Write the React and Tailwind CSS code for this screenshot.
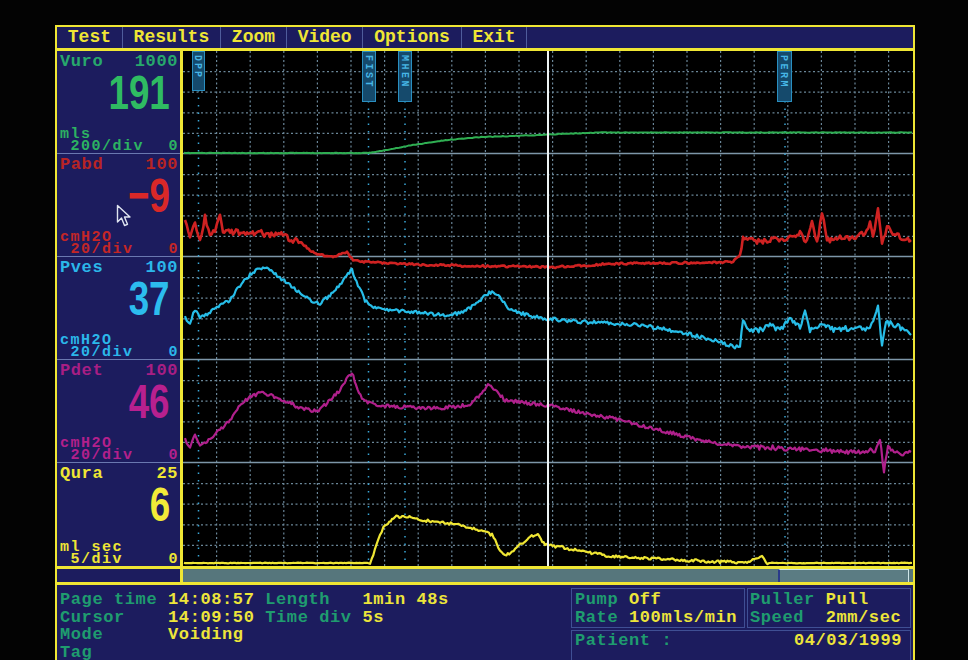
import React from 'react';

// Deterministic jitter so the pressure traces look like raw sampled data
function rng(seed) {
  let s = seed;
  return () => {
    s = (s * 16807) % 2147483647;
    return (s - 1) / 2147483646;
  };
}

const OX = 183;
const OY = 51;

function trace(keys, amp, seed, step = 1.5) {
  const r = rng(seed);
  const pts = [];
  for (let i = 0; i < keys.length - 1; i++) {
    const [x0, y0] = keys[i];
    const [x1, y1] = keys[i + 1];
    const n = Math.max(1, Math.round((x1 - x0) / step));
    for (let j = 0; j < n; j++) {
      const t = j / n;
      const x = x0 + (x1 - x0) * t;
      const y = y0 + (y1 - y0) * t;
      const a = amp(x);
      pts.push([x, y + (r() - 0.5) * 2 * a]);
    }
  }
  pts.push(keys[keys.length - 1]);
  return pts.map(([x, y]) => `${(x - OX).toFixed(1)},${(y - OY).toFixed(1)}`).join(' ');
}

const vuroKeys = [
  [184, 153], [368, 153], [387, 150], [413, 145], [447, 140], [480, 137], [513, 136],
  [560, 134], [600, 132.5], [912, 132.5],
];

const pabdKeys = [
  [185, 223], [190, 237], [195, 225], [200, 240], [205, 217], [210, 237], [215, 230],
  [220, 213], [223, 233], [233, 232], [247, 233], [257, 232], [270, 235], [280, 232],
  [290, 240], [300, 242], [310, 250], [320, 255], [333, 257], [347, 252], [353, 260],
  [367, 262], [393, 263], [430, 265], [480, 266], [560, 267], [607, 264], [673, 263],
  [733, 262], [740, 255], [743, 237], [757, 242], [773, 240], [793, 237], [800, 233],
  [807, 242], [812, 220], [817, 243], [822, 211], [827, 240], [840, 238], [857, 237],
  [865, 232], [870, 223], [873, 237], [878, 207], [882, 243], [887, 227], [893, 233],
  [900, 237], [911, 240],
];

const pvesKeys = [
  [185, 318], [190, 322], [195, 310], [200, 318], [210, 312], [220, 305], [230, 300],
  [240, 285], [250, 275], [260, 268], [270, 270], [280, 278], [290, 285], [300, 293],
  [310, 300], [320, 303], [330, 295], [340, 285], [348, 273], [352, 270], [358, 285],
  [365, 300], [375, 308], [390, 310], [410, 312], [440, 315], [460, 313], [475, 305],
  [485, 295], [492, 292], [500, 298], [510, 310], [520, 313], [540, 318], [560, 320],
  [600, 323], [640, 325], [680, 332], [700, 337], [720, 342], [735, 347], [740, 345],
  [743, 322], [750, 330], [760, 330], [770, 325], [780, 330], [790, 318], [800, 328],
  [805, 308], [810, 330], [820, 325], [835, 330], [850, 328], [870, 330], [878, 305],
  [882, 347], [886, 322], [895, 325], [905, 330], [911, 335],
];

const pdetKeys = [
  [185, 440], [190, 448], [195, 435], [200, 445], [210, 440], [220, 430], [230, 420],
  [240, 405], [250, 397], [260, 393], [270, 395], [280, 400], [290, 403], [300, 408],
  [310, 410], [320, 410], [330, 400], [340, 390], [348, 377], [352, 372], [356, 385],
  [362, 400], [375, 405], [400, 407], [440, 408], [470, 405], [480, 395], [488, 385],
  [495, 390], [505, 400], [520, 402], [545, 405], [580, 412], [620, 420], [660, 430],
  [700, 440], [740, 447], [780, 448], [820, 450], [860, 452], [875, 450], [880, 438],
  [884, 472], [888, 448], [900, 455], [911, 452],
];

const quraKeys = [
  [184, 563], [370, 563], [375, 550], [380, 535], [385, 525], [395, 517], [405, 516],
  [420, 520], [440, 522], [460, 525], [480, 530], [492, 535], [500, 550], [505, 555],
  [512, 552], [520, 545], [530, 537], [538, 535], [545, 545], [560, 547], [575, 550],
  [590, 553], [610, 556], [640, 558], [680, 560], [720, 562], [750, 562], [757, 558],
  [762, 556], [766, 563], [912, 563],
];

const traces = [
  { pts: trace(vuroKeys, () => 0.3, 11), color: '#2fae52', w: 2 },
  { pts: trace(pabdKeys, (x) => (x < 300 ? 3 : x > 740 ? 2.6 : 1), 23), color: '#cf2222', w: 2.6 },
  { pts: trace(pvesKeys, (x) => (x > 740 ? 2.6 : 1.8), 37), color: '#27bde8', w: 2.2 },
  { pts: trace(pdetKeys, (x) => (x > 740 ? 2.4 : 1.8), 51), color: '#b0208c', w: 2.2 },
  { pts: trace(quraKeys, (x) => (x < 370 || x > 770 ? 0.3 : 1.4), 67), color: '#efe634', w: 2.2 },
];

const markers = [
  { x: 9, w: 13, h: 39, line: 15.5, label: 'DPP' },
  { x: 179, w: 14, h: 50, line: 185.5, label: 'FIST' },
  { x: 215, w: 14, h: 50, line: 222, label: 'MHEN' },
  { x: 594, w: 15, h: 50, line: 602, label: 'PERM' },
];

function Chart() {
  const W = 730;
  const H = 515;
  const vlines = Array.from({ length: 21 }, (_, i) => 33.6 * (i + 1));
  const hlines = [];
  for (let c = 0; c < 5; c++) for (let k = 1; k < 5; k++) hlines.push(c * 103 + k * 20.6);
  const seps = [1, 2, 3, 4].map((c) => c * 103 - 0.5);
  return (
    <svg width={W} height={H} className="block bg-black">
      {vlines.map((x) => (
        <line key={'v' + x} x1={x} y1={0} x2={x} y2={H} stroke="#6a8698" strokeWidth="1.2" strokeDasharray="2 2.5" />
      ))}
      {hlines.map((y) => (
        <line key={'h' + y} x1={0} y1={y} x2={W} y2={y} stroke="#6a8698" strokeWidth="1.2" strokeDasharray="2 2.5" />
      ))}
      {seps.map((y) => (
        <line key={'s' + y} x1={0} y1={y} x2={W} y2={y} stroke="#7d96a8" strokeWidth="1.4" />
      ))}
      {markers.map((m) => (
        <g key={m.label}>
          <line x1={m.line} y1={m.h} x2={m.line} y2={H} stroke="#3aa6d6" strokeWidth="1.5" strokeDasharray="1.5 6" />
          <rect x={m.x + 0.5} y={0.5} width={m.w - 1} height={m.h} fill="#154a6c" stroke="#2a8fc0" strokeWidth="1" />
          <text
            x={m.x + m.w / 2 - 3.5}
            y={4}
            transform={`rotate(90 ${m.x + m.w / 2 - 3.5} 4)`}
            fill="#47b6e6"
            fontSize="10"
            fontWeight="bold"
            letterSpacing={m.h > 40 ? 2.5 : 2}
            fontFamily="Liberation Mono, monospace"
          >
            {m.label}
          </text>
        </g>
      ))}
      {traces.map((t, i) => (
        <polyline key={i} points={t.pts} fill="none" stroke={t.color} strokeWidth={t.w} strokeLinejoin="round" />
      ))}
      <line x1={365} y1={0} x2={365} y2={H} stroke="#eef4f4" strokeWidth="2" />
    </svg>
  );
}

const channels = [
  { name: 'Vuro', range: '1000', value: '191', unit: 'mls', div: ' 200/div', text: 'text-[#2cb262]', label: 'text-[#27a86c]', big: 'text-[#2fbb62]' },
  { name: 'Pabd', range: '100', value: '\u22129', unit: 'cmH2O', div: ' 20/div', text: 'text-[#c42626]', label: 'text-[#b82424]', big: 'text-[#d92828]', pointer: true },
  { name: 'Pves', range: '100', value: '37', unit: 'cmH2O', div: ' 20/div', text: 'text-[#2bb7ea]', label: 'text-[#2bb7ea]', big: 'text-[#2cbcee]' },
  { name: 'Pdet', range: '100', value: '46', unit: 'cmH2O', div: ' 20/div', text: 'text-[#b3208c]', label: 'text-[#a81e84]', big: 'text-[#b8208f]' },
  { name: 'Qura', range: '25', value: '6', unit: 'ml sec', div: ' 5/div', text: 'text-[#efe634]', label: 'text-[#efe634]', big: 'text-[#f2ea38]', last: true },
];

function Channel({ c }) {
  return (
    <div className={c.last ? `relative h-[103px] flex flex-col ${c.text}` : `relative h-[103px] flex flex-col border-b border-[#6a78b0] ${c.text}`}>
      <div className={`flex justify-between pl-[3px] pr-[2px] pt-[3px] leading-[16px] text-[17px] tracking-[0.6px] ${c.label}`}>
        <span>{c.name}</span>
        <span>{c.range}</span>
      </div>
      <div className={`flex justify-end pr-[10px] mt-[2px] h-[40px] leading-[40px] text-[49px] font-['Liberation_Sans',sans-serif] ${c.big}`}>
        <span className="inline-block origin-right scale-x-[0.75]">{c.value}</span>
      </div>
      <div className="mt-auto text-[15px] tracking-[1.5px] leading-[12px] whitespace-pre">
        <div className="pl-[3px]">{c.unit}</div>
        <div className="flex justify-between pl-[3px] pr-[1px]">
          <span>{c.div}</span>
          <span>0</span>
        </div>
      </div>
      {c.pointer && (
        <svg className="absolute left-[59px] top-[50px]" width="16" height="24" viewBox="0 0 16 24">
          <path d="M1.5 1.5 V18 L5.5 14 L8.5 21.5 L11.5 20.3 L8.5 13 H14 Z" fill="none" stroke="#dfe4f0" strokeWidth="1.4" strokeLinejoin="round" />
        </svg>
      )}
    </div>
  );
}

const menu = ['Test', 'Results', 'Zoom', 'Video', 'Options', 'Exit'];

function Label({ children }) {
  return <span className="text-[#1f9c6f]">{children}</span>;
}
function Val({ children }) {
  return <span className="text-[#ede53a]">{children}</span>;
}

export default function App() {
  return (
    <div className="w-[968px] h-[660px] overflow-hidden bg-[#030303] pt-[25px] pl-[55px] font-['Liberation_Mono',monospace] font-bold text-[18px]">
      <div className="w-[860px] h-[650px] border-2 border-b-0 border-[#efe634] bg-[#1c1c5e] flex flex-col">
        {/* menu bar */}
        <div className="flex h-[24px] shrink-0 border-b-[3px] border-[#efe634] text-[#efe634] leading-[21px] whitespace-pre">
          {menu.map((m) => (
            <div key={m} className="px-[1ch] border-r border-[#4f5c9c]">
              {m}
            </div>
          ))}
        </div>

        {/* channel readouts and trace area */}
        <div className="flex h-[515px] shrink-0">
          <div className="w-[126px] shrink-0 border-r-[3px] border-[#efe634] flex flex-col">
            {channels.map((c) => (
              <Channel key={c.name} c={c} />
            ))}
          </div>
          <Chart />
        </div>

        {/* scroll bar */}
        <div className="flex h-[19px] shrink-0 border-y-[3px] border-[#efe634]">
          <div className="w-[126px] shrink-0 border-r-[3px] border-[#efe634] bg-[#1c1c5e]" />
          <div className="flex-1 bg-[#56767c] flex justify-end pr-[4px]">
            <div className="w-[131px] bg-[#5b7c83] border-t border-r border-[#cfe6e8] border-l-2 border-l-[#2a3a8a]" />
          </div>
        </div>

        {/* status area */}
        <div className="flex flex-1 text-[17px] tracking-[0.6px]">
          <div className="w-[514px] shrink-0 pl-[3px] pt-[6px] leading-[17.5px] whitespace-pre">
            <div>
              <Label>Page time </Label>
              <Val>14:08:57</Val>
              <Label> Length   </Label>
              <Val>1min 48s</Val>
            </div>
            <div>
              <Label>Cursor    </Label>
              <Val>14:09:50</Val>
              <Label> Time div </Label>
              <Val>5s</Val>
            </div>
            <div>
              <Label>Mode      </Label>
              <Val>Voiding</Val>
            </div>
            <div>
              <Label>Tag</Label>
            </div>
          </div>
          <div className="flex-1 pt-[3px] pr-[2px] flex flex-col gap-[2px] leading-[17.5px] whitespace-pre">
            <div className="flex gap-[2px] h-[40px]">
              <div className="w-[174px] border border-[#3f4f94] pl-[3px] pt-[2px]">
                <div>
                  <Label>Pump </Label>
                  <Val>Off</Val>
                </div>
                <div>
                  <Label>Rate </Label>
                  <Val>100mls/min</Val>
                </div>
              </div>
              <div className="flex-1 border border-[#3f4f94] pl-[2px] pt-[2px]">
                <div>
                  <Label>Puller </Label>
                  <Val>Pull</Val>
                </div>
                <div>
                  <Label>Speed  </Label>
                  <Val>2mm/sec</Val>
                </div>
              </div>
            </div>
            <div className="flex-1 border border-[#3f4f94] flex justify-between items-start pl-[3px] pr-[8px] pt-[1px]">
              <Label>Patient :</Label>
              <Val>04/03/1999</Val>
            </div>
          </div>
        </div>
      </div>
    </div>
  );
}
